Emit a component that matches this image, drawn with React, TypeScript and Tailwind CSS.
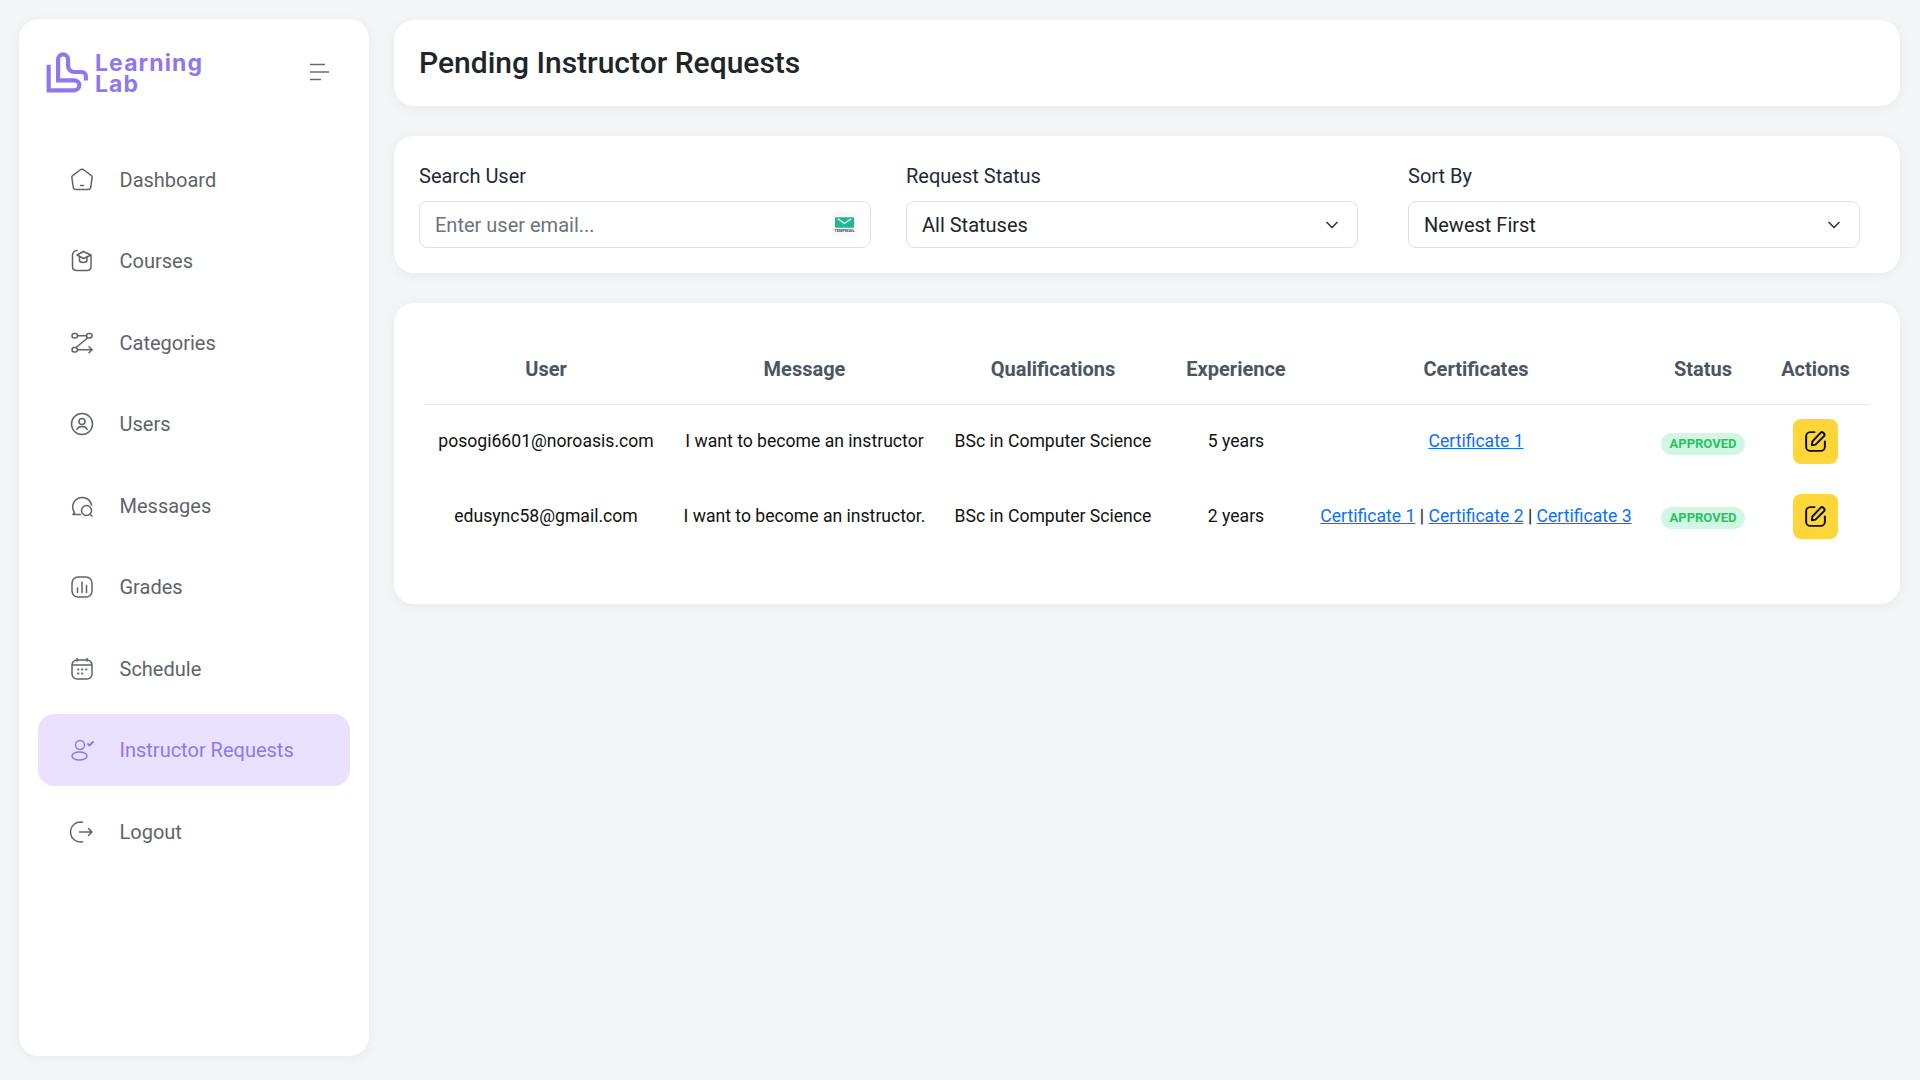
import React, { FunctionComponent, ReactNode } from "react";
import { ChevronDown } from "lucide-react";

const Icon: FunctionComponent<{ children: ReactNode }> = ({ children }) => (
  <svg
    viewBox="0 0 24 24"
    fill="none"
    stroke="currentColor"
    strokeWidth="1.500"
    strokeLinecap="round"
    strokeLinejoin="round"
    className="w-6 h-6 shrink-0"
  >
    {children}
  </svg>
);

const navItems: { label: string; active?: boolean; icon: ReactNode }[] = [
  {
    label: "Dashboard",
    icon: (
      <>
        <path d="M10 2 2.600 7.600a2 2 0 0 0-.7 2L3.200 19a3 3 0 0 0 3 2.600h11.600a3 3 0 0 0 3-2.600l1.300-9.400a2 2 0 0 0-.7-2L14 2a3.300 3.300 0 0 0-4 0Z" />
        <path d="M10.500 17.500h3" />
      </>
    ),
  },
  {
    label: "Courses",
    icon: (
      <>
        <path d="M7 1.500C4 1.500 2.500 4 2.500 6.500v11c0 2.500 1.500 4 4.500 4h10c2.500 0 4-1.500 4-4V7" />
        <path d="m7 6 6.500-3.500L21 6l-7.500 3.500L7 6Z" />
        <path d="M9.500 8v3.500c0 2.500 7.500 2.500 7.500 0V8" />
      </>
    ),
  },
  {
    label: "Categories",
    icon: (
      <>
        <rect x="2" y="2.500" width="5.500" height="4.500" rx="2.200" />
        <rect x="16.500" y="2.500" width="5.500" height="4.500" rx="2.200" />
        <rect x="2" y="16.500" width="5.500" height="4.500" rx="2.200" />
        <path d="M7.500 4.800h9" />
        <path d="M17.500 7 6 16.500" />
        <path d="M7.500 18.800H22" />
        <path d="m19 15.800 3 3-3 3" />
      </>
    ),
  },
  {
    label: "Users",
    icon: (
      <>
        <circle cx="12" cy="12" r="10.500" />
        <circle cx="12" cy="9.500" r="3" />
        <path d="M6.800 17.500c1-2.200 3-3 5.200-3s4.200.8 5.200 3" />
      </>
    ),
  },
  {
    label: "Messages",
    icon: (
      <>
        <path d="M10.500 20.500H3l1.500-2A9.500 9.500 0 1 1 21.500 11" />
        <circle cx="16.500" cy="16.500" r="5" />
        <path d="M20 20.500 22 22" />
      </>
    ),
  },
  {
    label: "Grades",
    icon: (
      <>
        <rect x="2" y="2" width="20" height="20" rx="6" />
        <path d="M7.500 13v4.500M12 7v10.500M16.500 10.500v7" />
      </>
    ),
  },
  {
    label: "Schedule",
    icon: (
      <>
        <rect x="2" y="3" width="20" height="19" rx="5" />
        <path d="M2.500 8h19M7 1.500V4M17 1.500V4" />
        <path d="M8 12.500h.5M12 12.500h.5M16 12.500h.5M8 16.500h.5M12 16.500h.5" strokeWidth="1.800" />
      </>
    ),
  },
  {
    label: "Instructor Requests",
    active: true,
    icon: (
      <>
        <circle cx="10" cy="7" r="4.500" />
        <ellipse cx="9.500" cy="18" rx="7.500" ry="4" />
        <path d="m18 6 1.500 1.500L23 4" strokeWidth="1.800" />
      </>
    ),
  },
  {
    label: "Logout",
    icon: (
      <>
        <path d="M12.500 2.200A10 10 0 1 0 12.500 21.800" />
        <path d="M9.500 12H22M18.500 8.500 22 12l-3.500 3.500" />
      </>
    ),
  },
];

const Logo: FunctionComponent = () => (
  <svg viewBox="6 4 42 42" className="w-[44px] h-[44px] shrink-0" fill="none" stroke="#9077ee" strokeWidth="4">
    <path d="M9.500 18V42.500H34a4.750 4.750 0 0 0 0-9.500H18.500V13a4.750 4.750 0 0 1 9.500 0V19a6 6 0 0 0 6 6H41a4 4 0 0 1 4 4V33" />
  </svg>
);

const EditIcon: FunctionComponent = () => (
  <svg viewBox="0 0 24 24" fill="none" stroke="#111111" strokeWidth="1.900" strokeLinecap="round" strokeLinejoin="round" className="w-[25px] h-[25px]">
    <path d="M11 3H7a4 4 0 0 0-4 4v10a4 4 0 0 0 4 4h10a4 4 0 0 0 4-4v-5" />
    <path d="M8.500 15.500 9 12l8-8.500c1.500-1.500 4.800 1.500 3.300 3.200L12 15l-3.500.5Z" />
  </svg>
);

const TempMail: FunctionComponent = () => (
  <div className="w-[25px] h-[25px] bg-[#f7f8f8] flex flex-col items-center justify-center rounded-sm">
    <svg viewBox="0 0 20 11" className="w-[19px] h-[11px]">
      <rect width="20" height="11" rx="1" fill="#1fb796" />
      <path d="m3 1.500 7 5 7-5" stroke="#ffffff" strokeWidth="1.300" fill="none" />
    </svg>
    <span className="text-[4px] leading-[5px] font-bold text-[#34495e]">TEMPMAIL</span>
  </div>
);

const Filter: FunctionComponent<{ label: string; className: string; children: ReactNode }> = ({
  label,
  className,
  children,
}) => (
  <div className={className}>
    <div className="text-[20px] leading-[27px] text-[#1f2937] mb-[11px]">{label}</div>
    <div className="h-[47px] border border-[#dee2e6] rounded-lg flex items-center justify-between pl-[15px] pr-[13px] text-[20px]">
      {children}
    </div>
  </div>
);

const CertLink: FunctionComponent<{ n: number }> = ({ n }) => (
  <a href="#" className="text-[#0d6efd] underline">
    Certificate {n}
  </a>
);

const Approved: FunctionComponent = () => (
  <span className="inline-block h-[22px] leading-[22px] px-[8.500px] rounded-full bg-[#d1f7e4] text-[#22c55e] text-[13px] font-bold">
    APPROVED
  </span>
);

const EditButton: FunctionComponent = () => (
  <button className="w-[45px] h-[45px] mx-auto bg-[#ffd639] rounded-lg flex items-center justify-center">
    <EditIcon />
  </button>
);

const rows = [
  {
    user: "posogi6601@noroasis.com",
    message: "I want to become an instructor",
    experience: "5 years",
    certs: [1],
  },
  {
    user: "edusync58@gmail.com",
    message: "I want to become an instructor.",
    experience: "2 years",
    certs: [1, 2, 3],
  },
];

const headers = ["User", "Message", "Qualifications", "Experience", "Certificates", "Status", "Actions"];

const App: FunctionComponent = () => {
  return (
    <div className="w-[1920px] h-[1080px] bg-[#f4f5f7] flex items-start pt-[19px] pl-[19px] font-['Roboto',sans-serif] overflow-hidden">
      <aside className="w-[350px] h-[1037px] bg-white rounded-[20px] shadow-[0_2px_12px_rgba(0,0,0,0.05)] shrink-0">
        <div className="flex items-center justify-between pl-[26px] pr-[40px] h-[106px]">
          <div className="flex items-center gap-[6px]">
            <Logo />
            <div className="font-['Inter',sans-serif] font-bold text-[23px] leading-[21px] text-[#9077ee] tracking-[1.100px] pt-[4px]">
              Learning
              <br />
              Lab
            </div>
          </div>
          <svg viewBox="0 0 20 18" className="w-[20px] h-[18px]" stroke="#6b6b6b" strokeWidth="1.300">
            <path d="M1 1.500h15M1 9h19M1 16.500h11" />
          </svg>
        </div>
        <nav className="flex flex-col gap-[9.500px] px-[19px] mt-[18.500px]">
          {navItems.map((item) => (
            <div
              key={item.label}
              className={`h-[72px] flex items-center gap-[25.500px] pl-[32px] rounded-2xl text-[20px] ${
                item.active ? "bg-[#e9e1ff] text-[#9077ee]" : "text-[#5f6368]"
              }`}
            >
              <Icon>{item.icon}</Icon>
              <span>{item.label}</span>
            </div>
          ))}
        </nav>
      </aside>

      <main className="ml-[25px] mt-[1px] w-[1506px] flex flex-col gap-[30px]">
        <div className="h-[86px] bg-white rounded-[20px] shadow-[0_2px_12px_rgba(0,0,0,0.05)] flex items-center px-[25px]">
          <h1 className="text-[30px] font-medium text-[#212529] leading-none">Pending Instructor Requests</h1>
        </div>

        <div className="h-[137px] bg-white rounded-[20px] shadow-[0_2px_12px_rgba(0,0,0,0.05)] flex pl-[25px] pt-[27px]">
          <Filter label="Search User" className="w-[452px]">
            <span className="text-[#6b7280]">Enter user email...</span>
            <TempMail />
          </Filter>
          <Filter label="Request Status" className="w-[452px] ml-[35px]">
            <span className="text-[#212529]">All Statuses</span>
            <ChevronDown className="w-[20px] h-[20px] text-[#343a40] mr-[2px]" />
          </Filter>
          <Filter label="Sort By" className="w-[452px] ml-[50px]">
            <span className="text-[#212529]">Newest First</span>
            <ChevronDown className="w-[20px] h-[20px] text-[#343a40] mr-[2px]" />
          </Filter>
        </div>

        <div className="h-[301px] bg-white rounded-[20px] shadow-[0_2px_12px_rgba(0,0,0,0.05)] px-[30px] pt-[32px]">
          <table className="w-[1446px] table-fixed border-collapse text-center text-[17.600px] text-[#111111]">
            <colgroup>
              <col className="w-[244px]" />
              <col className="w-[273px]" />
              <col className="w-[224px]" />
              <col className="w-[142px]" />
              <col className="w-[338px]" />
              <col className="w-[116px]" />
              <col className="w-[109px]" />
            </colgroup>
            <thead>
              <tr className="h-[69px] border-b-[1.500px] border-[#e5e7eb]">
                {headers.map((h) => (
                  <th key={h} className="font-bold text-[#4b5563] text-[20px] pb-[1px]">
                    {h}
                  </th>
                ))}
              </tr>
            </thead>
            <tbody>
              {rows.map((row) => (
                <tr key={row.user} className="h-[75px]">
                  <td className="whitespace-nowrap pb-[1px]">{row.user}</td>
                  <td className="whitespace-nowrap pb-[1px]">{row.message}</td>
                  <td className="whitespace-nowrap pb-[1px]">BSc in Computer Science</td>
                  <td className="whitespace-nowrap pb-[1px]">{row.experience}</td>
                  <td className="whitespace-nowrap pb-[1px]">
                    {row.certs.map((n, i) => (
                      <React.Fragment key={n}>
                        {i > 0 && " | "}
                        <CertLink n={n} />
                      </React.Fragment>
                    ))}
                  </td>
                  <td>
                    <Approved />
                  </td>
                  <td>
                    <EditButton />
                  </td>
                </tr>
              ))}
            </tbody>
          </table>
        </div>
      </main>
    </div>
  );
};

export default App;
